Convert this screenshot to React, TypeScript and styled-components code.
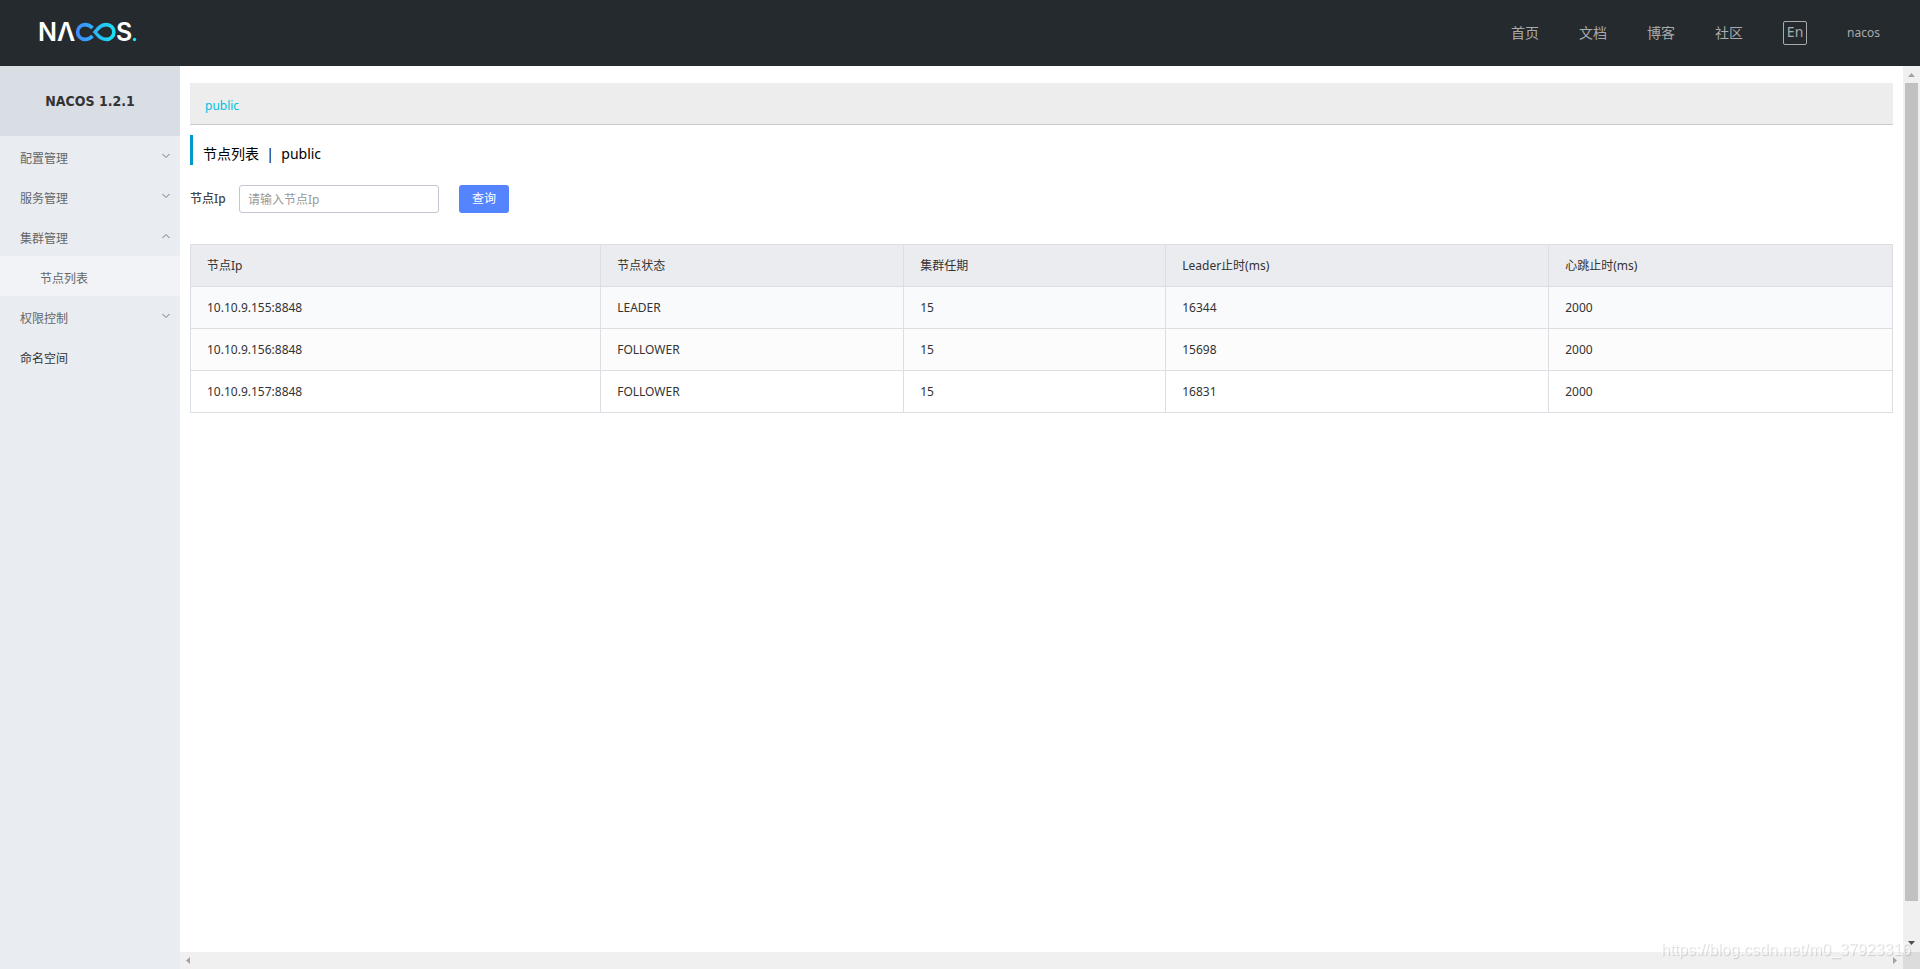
import React from "react";
import styled, { createGlobalStyle } from "styled-components";

const GlobalStyle = createGlobalStyle`
  * { box-sizing: border-box; }
  body {
    margin: 0;
    background: #fff;
    color: #333;
    font: 12px/18px "Noto Sans", "Noto Sans CJK SC", sans-serif;
  }
  button, input { font: inherit; }
  a { color: inherit; text-decoration: none; }
`;

const Page = styled.div`
  display: flex;
  flex-direction: column;
  height: 100vh;
`;

const Header = styled.header`
  display: flex;
  align-items: center;
  justify-content: space-between;
  flex: none;
  height: 66px;
  padding: 0 40px 0 36px;
  background: #252a2f;
`;

const Logo = styled.svg`
  display: block;
  width: 106px;
  height: 44px;
  font: 600 25px "Inter", sans-serif;
`;

const Nav = styled.nav`
  display: flex;
  align-items: center;
  gap: 40px;
  color: #a8aaac;
`;

const NavLink = styled.a<{ $small?: boolean }>`
  font-size: ${(p) => (p.$small ? 12 : 14)}px;
  line-height: 20px;
`;

const LangButton = styled.button`
  width: 24px;
  height: 24px;
  padding: 0 0 2px;
  border: 1px solid #a8aaac;
  border-radius: 2px;
  background: none;
  color: inherit;
  font-size: 14px;
  line-height: 20px;
`;

const Body = styled.div`
  display: flex;
  flex: 1;
  min-height: 0;
`;

const Sidebar = styled.aside`
  flex: none;
  width: 180px;
  background: #e9edf2;
`;

const Version = styled.h1`
  margin: 0;
  padding: 0;
  background: #d9dde4;
  font-family: "DejaVu Sans Condensed", "Noto Sans", sans-serif;
  font-size: 14px;
  line-height: 70px;
  text-align: center;
`;

const Menu = styled.ul`
  margin: 0;
  padding: 0;
  list-style: none;
`;

const MenuItem = styled.a<{ $sub?: boolean; $strong?: boolean }>`
  display: flex;
  align-items: center;
  justify-content: space-between;
  height: 40px;
  padding: 6px 10px 0 ${(p) => (p.$sub ? 40 : 20)}px;
  background: ${(p) => (p.$sub ? "#f1f3f7" : "transparent")};
  color: ${(p) => (p.$strong ? "#333" : "#666")};
`;

const Arrow = styled.svg`
  width: 8px;
  height: 8px;
  margin-bottom: 6px;
  fill: none;
  stroke: #777;
`;

const Panel = styled.div`
  display: grid;
  grid-template: minmax(0, 1fr) 17px / minmax(0, 1fr) 17px;
  flex: 1;
  min-width: 0;
`;

const Content = styled.main`
  padding: 17px 10px 0;
  overflow: hidden;
`;

const NamespaceBar = styled.div`
  height: 42px;
  padding: 14px 15px 0;
  border-bottom: 1px solid #ccc;
  background: #ededed;
  color: #00c1de;
`;

const Heading = styled.h2`
  height: 30px;
  margin: 10px 0 20px;
  padding: 4px 0 0 10px;
  border-left: 3px solid #09c;
  color: #000;
  font-size: 14px;
  font-weight: 400;
  line-height: 30px;
  white-space: pre;
`;

const SearchForm = styled.form`
  display: flex;
  align-items: center;
  margin-bottom: 31px;
`;

const Label = styled.label`
  width: 49px;
  color: #444;
  font-weight: 500;
`;

const TextInput = styled.input`
  width: 200px;
  height: 28px;
  margin-right: 20px;
  padding: 0 8px;
  border: 1px solid #c4c6cf;
  border-radius: 3px;
  outline: none;
  &::placeholder { color: #999; opacity: 1; }
`;

const SubmitButton = styled.button`
  width: 50px;
  height: 28px;
  padding: 0;
  border: 0;
  border-radius: 3px;
  background: #5584ff;
  color: #fff;
`;

const Table = styled.table`
  width: 100%;
  border-collapse: collapse;
  table-layout: fixed;
`;

const HeadCell = styled.th<{ $width: string }>`
  width: ${(p) => p.$width};
  height: 42px;
  padding: 0 16px;
  border: 1px solid #dcdee3;
  background: #ebecf0;
  font-weight: 400;
  text-align: left;
`;

const Row = styled.tr<{ $background: string }>`
  background: ${(p) => p.$background};
`;

const Cell = styled.td`
  height: 42px;
  padding: 0 16px;
  border: 1px solid #dcdee3;
`;

const ScrollTrack = styled.div<{ $vertical?: boolean }>`
  display: flex;
  flex-direction: ${(p) => (p.$vertical ? "column" : "row")};
  align-items: center;
  justify-content: space-between;
  background: #f0f0f0;
`;

const ScrollArrow = styled.svg<{ $color: string }>`
  flex: none;
  width: 17px;
  height: 17px;
  fill: ${(p) => p.$color};
`;

const ScrollRail = styled.div`
  flex: 1;
  width: 13px;
`;

const ScrollThumb = styled.div`
  height: 96%;
  background: #c1c1c1;
`;

const ScrollCorner = styled.div`
  background: #dcdcdc;
`;

const Watermark = styled.div`
  position: fixed;
  right: 9px;
  bottom: 10px;
  color: rgba(255, 255, 255, 0.7);
  font: 16px/18px "Liberation Sans", sans-serif;
  text-shadow: 1px 1px 1px rgba(0, 0, 0, 0.16);
  pointer-events: none;
`;

const navLinks = ["首页", "文档", "博客", "社区"];

type MenuEntry = { text: string; arrow?: "up" | "down"; sub?: boolean; strong?: boolean };

const menu: MenuEntry[] = [
  { text: "配置管理", arrow: "down" },
  { text: "服务管理", arrow: "down" },
  { text: "集群管理", arrow: "up" },
  { text: "节点列表", sub: true },
  { text: "权限控制", arrow: "down" },
  { text: "命名空间", strong: true },
];

const columns = [
  { title: "节点Ip", width: "24.1%" },
  { title: "节点状态", width: "17.8%" },
  { title: "集群任期", width: "15.4%" },
  { title: "Leader止时(ms)", width: "22.5%" },
  { title: "心跳止时(ms)", width: "20.2%" },
];

const nodes = [
  { background: "#f9fafc", cells: ["10.10.9.155:8848", "LEADER", "15", "16344", "2000"] },
  { background: "#fcfcfc", cells: ["10.10.9.156:8848", "FOLLOWER", "15", "15698", "2000"] },
  { background: "#fff", cells: ["10.10.9.157:8848", "FOLLOWER", "15", "16831", "2000"] },
];

function NacosLogo() {
  return (
    <Logo viewBox="-4 -10 106 44" role="img" aria-label="NACOS">
      <defs>
        <linearGradient id="loop" gradientUnits="userSpaceOnUse" x1="36" y1="0" x2="76" y2="0">
          <stop offset="0" stopColor="#4088ff" />
          <stop offset="1" stopColor="#16e6f5" />
        </linearGradient>
      </defs>
      <text x="-2" y="20" fill="#fff">N</text>
      <text x="17" y="20" fill="#fff">Λ</text>
      <path
        d="M52.5 15 C50 17.7 48 18.4 45 18.4 A7.4 7.4 0 0 1 45 3.6 C48 3.6 50 4.3 52.5 7 M55 11 C59 6 61.5 3.6 66.5 3.6 A7.4 7.4 0 0 1 66.5 18.4 C61.5 18.4 59 16 55 11 Z"
        fill="none"
        stroke="url(#loop)"
        strokeWidth="3.6"
      />
      <text x="76" y="20" fill="#fff">S</text>
      <circle cx="94.5" cy="18.5" r="1.7" fill="#16e6f5" />
    </Logo>
  );
}

export default function App() {
  return (
    <Page>
      <GlobalStyle />
      <Header>
        <NacosLogo />
        <Nav>
          {navLinks.map((text) => (
            <NavLink key={text} href="#">{text}</NavLink>
          ))}
          <LangButton type="button">En</LangButton>
          <NavLink href="#" $small>nacos</NavLink>
        </Nav>
      </Header>
      <Body>
        <Sidebar>
          <Version>NACOS 1.2.1</Version>
          <Menu>
            {menu.map((m) => (
              <li key={m.text}>
                <MenuItem href="#" $sub={m.sub} $strong={m.strong}>
                  {m.text}
                  {m.arrow && (
                    <Arrow viewBox="0 0 8 8">
                      <path d={m.arrow === "down" ? "M.5 2 4 5.5 7.5 2" : "M.5 6 4 2.5 7.5 6"} />
                    </Arrow>
                  )}
                </MenuItem>
              </li>
            ))}
          </Menu>
        </Sidebar>
        <Panel>
          <Content>
            <NamespaceBar><a href="#">public</a></NamespaceBar>
            <Heading>{"节点列表  |  public"}</Heading>
            <SearchForm onSubmit={(e) => e.preventDefault()}>
              <Label htmlFor="node-ip">节点Ip</Label>
              <TextInput id="node-ip" placeholder="请输入节点Ip" />
              <SubmitButton type="submit">查询</SubmitButton>
            </SearchForm>
            <Table>
              <thead>
                <tr>
                  {columns.map((c) => (
                    <HeadCell key={c.title} scope="col" $width={c.width}>{c.title}</HeadCell>
                  ))}
                </tr>
              </thead>
              <tbody>
                {nodes.map((n) => (
                  <Row key={n.cells[0]} $background={n.background}>
                    {n.cells.map((cell, i) => (
                      <Cell key={i}>{cell}</Cell>
                    ))}
                  </Row>
                ))}
              </tbody>
            </Table>
          </Content>
          <ScrollTrack $vertical>
            <ScrollArrow viewBox="0 0 17 17" $color="#a3a3a3"><path d="M5 11h7L8.5 7z" /></ScrollArrow>
            <ScrollRail><ScrollThumb /></ScrollRail>
            <ScrollArrow viewBox="0 0 17 17" $color="#505050"><path d="M5 6h7L8.5 10z" /></ScrollArrow>
          </ScrollTrack>
          <ScrollTrack>
            <ScrollArrow viewBox="0 0 17 17" $color="#a3a3a3"><path d="M10 5v7L6 8.5z" /></ScrollArrow>
            <ScrollArrow viewBox="0 0 17 17" $color="#a3a3a3"><path d="M7 5v7L11 8.5z" /></ScrollArrow>
          </ScrollTrack>
          <ScrollCorner />
        </Panel>
      </Body>
      <Watermark>https://blog.csdn.net/m0_37923316</Watermark>
    </Page>
  );
}
